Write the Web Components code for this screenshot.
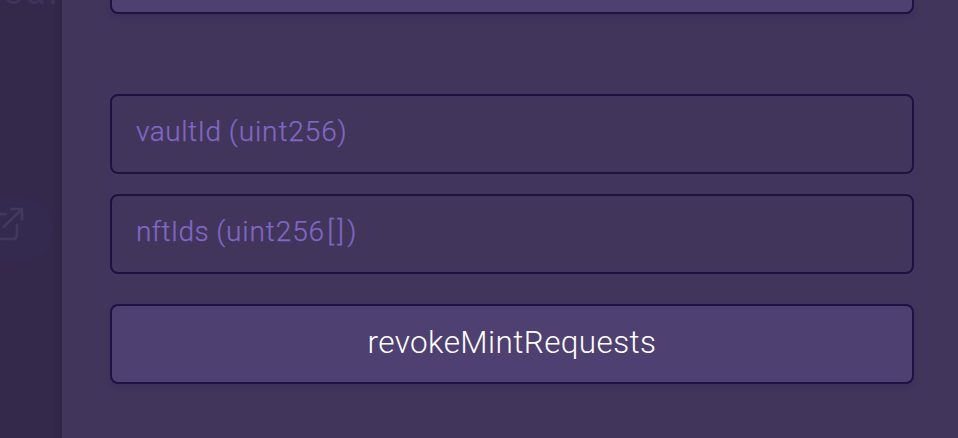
<!DOCTYPE html>
<html lang="en"><head><meta charset="utf-8"><title>Contract functions</title>
<style>
html,body{margin:0;height:100%;overflow:hidden;background:#42355b;font-family:Roboto,"Open Sans",sans-serif;font-weight:300}
.type{letter-spacing:.9px}
.array{letter-spacing:3px}
</style></head><body>
<app-shell></app-shell>
<script>
const define=(name,html)=>{
  const t=document.createElement('template');t.innerHTML=html;
  customElements.define(name,class extends HTMLElement{
    constructor(){super();this.attachShadow({mode:'open'}).append(t.content.cloneNode(true))}
  });
};
define('dimmed-page',`<style>
:host{display:block;width:62px;height:438px;box-sizing:border-box;overflow:hidden;background:linear-gradient(90deg,#34284b 0,#34284b 52px,#302545 62px)}
.word{display:flow-root;height:197px;font-size:37px;line-height:40px;letter-spacing:3px;font-weight:400;color:#3e335a;white-space:nowrap}
.word span{display:block;margin:-28px 0 0 3px}
.pill{width:53px;height:64px;border-radius:0 32px 32px 0;background:#342a4f}
svg{display:block}
</style><div class="word"><span>earn</span></div>
<div class="pill"><svg width="53" height="64" viewBox="0 197 53 64" fill="none" stroke="#43385f" stroke-width="2.7" stroke-linecap="round" stroke-linejoin="round"><path d="M-6 214H6M17 225V235Q17 239 13 239H-6M3.5 227L22 209M11.500 209H22V219.500"/></svg></div>`);
define('param-field',`<style>
:host{display:flex;align-items:center;box-sizing:border-box;height:80px;padding:0 24px 5px;border:2px solid #201144;border-radius:8px;background:#42355b;color:#8067c4;font-size:28px;white-space:nowrap}
span{letter-spacing:var(--track,0);-webkit-text-stroke:.25px currentColor}
</style><span><slot></slot></span>`);
define('call-button',`<style>
:host{display:block}
button{display:flex;align-items:center;justify-content:center;box-sizing:border-box;width:100%;height:80px;margin:0;padding:0 0 4px;border:2px solid #201144;border-radius:8px;background:#4f4072;color:#fff;font:inherit;font-size:31.5px;letter-spacing:.4px;box-shadow:0 3px 6px #20114422}
</style><button><slot></slot></button>`);
define('function-panel',`<style>
:host{display:flex;flex-direction:column;flex:1;height:438px;box-sizing:border-box;padding:0 44px 0 48px;background:#42355b}
::slotted(.first){margin-top:-66px}
::slotted(.group){margin-top:80px;--track:.5px}
::slotted(.next){margin-top:20px;--track:.35px}
::slotted(.submit){margin-top:30px}
</style><slot></slot>`);
define('app-shell',`<style>
:host{display:flex;width:958px;height:438px;overflow:hidden}
dimmed-page{flex:none}
.type{letter-spacing:.9px}
.array{letter-spacing:3.2px}
</style><dimmed-page></dimmed-page>
<function-panel>
<call-button class="first"></call-button>
<param-field class="group">vaultId <span class="type">(uint256)</span></param-field>
<param-field class="next">nftIds <span class="type">(uint25<span class="array">6[]</span>)</span></param-field>
<call-button class="submit">revokeMintRequests</call-button>
</function-panel>`);
</script></body></html>
